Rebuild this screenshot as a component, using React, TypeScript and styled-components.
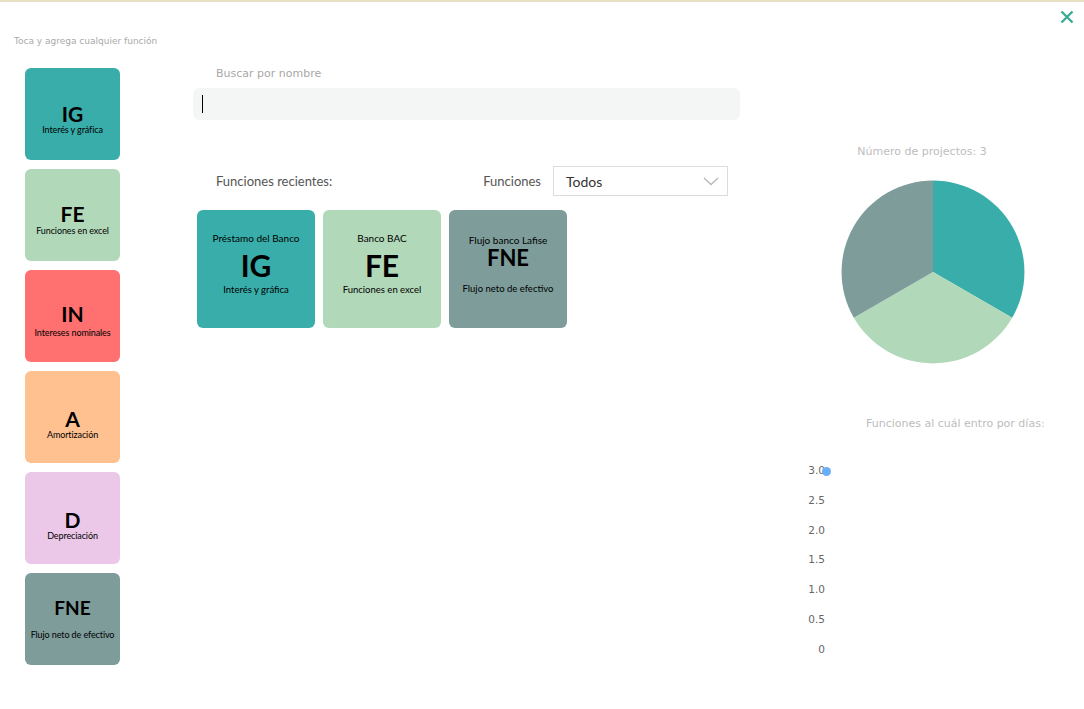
import React from "react";
import styled, { createGlobalStyle } from "styled-components";

const Global = createGlobalStyle`
  html, body { margin: 0; padding: 0; background: #fff; }
  body { font-family: "Open Sans", "DejaVu Sans", sans-serif; }
  * { box-sizing: border-box; }
`;

const Frame = styled.div`
  width: 1084px;
  height: 709px;
  border-top: 2px solid #e9dfc4;
  background: #fff;
  overflow: hidden;
`;

const Header = styled.header`
  display: flex;
  justify-content: space-between;
  align-items: flex-start;
  height: 66px;
  padding: 0 10px 0 14px;
`;

const Subtitle = styled.p`
  margin: 33px 0 0;
  font-family: "DejaVu Sans", sans-serif;
  font-size: 9px;
  line-height: 12px;
  color: #a9a9a9;
`;

const CloseButton = styled.button`
  margin-top: 7px;
  padding: 0;
  border: 0;
  background: none;
  width: 15px;
  height: 15px;
  display: flex;
  align-items: center;
  justify-content: center;
  cursor: pointer;
`;

const Body = styled.div`
  display: flex;
  align-items: flex-start;
  padding-left: 25px;
`;

const Sidebar = styled.nav`
  flex: 0 0 95px;
  display: flex;
  flex-direction: column;
  gap: 9px;
`;

const SideCard = styled.div<{ $bg: string; $top: number; $gap: number }>`
  width: 95px;
  height: 92px;
  border-radius: 6px;
  background: ${(p) => p.$bg};
  display: flex;
  flex-direction: column;
  align-items: center;
  padding-top: ${(p) => p.$top}px;
  gap: ${(p) => p.$gap}px;
  color: #000;
`;

const SideTitle = styled.div<{ $size: number }>`
  font-family: "Lato", sans-serif;
  font-weight: 700;
  font-size: ${(p) => p.$size}px;
  line-height: 20px;
`;

const SideSub = styled.div`
  font-family: "Lato", sans-serif;
  font-size: 9px;
  line-height: 12px;
  letter-spacing: -0.1px;
`;

const Main = styled.main`
  flex: 0 0 547px;
  margin-left: 73px;
  display: flex;
  flex-direction: column;
`;

const FieldLabel = styled.label`
  padding-left: 23px;
  font-family: "DejaVu Sans", sans-serif;
  font-size: 11px;
  line-height: 12px;
  color: #a8a8a8;
`;

const SearchBox = styled.div`
  margin-top: 8px;
  height: 32px;
  border-radius: 6px;
  background: #f3f6f5;
  display: flex;
  align-items: center;
  padding-left: 9px;
`;

const Caret = styled.span`
  width: 1px;
  height: 18px;
  background: #000;
`;

const RecentBar = styled.div`
  margin-top: 46px;
  height: 30px;
  display: flex;
  align-items: center;
  justify-content: space-between;
  padding: 0 12px 0 23px;
`;

const SectionLabel = styled.span`
  font-family: "Lato", sans-serif;
  font-size: 13px;
  color: #555;
`;

const FilterGroup = styled.div`
  display: flex;
  align-items: center;
  gap: 12px;
`;

const Select = styled.div`
  width: 175px;
  height: 30px;
  border: 1px solid #dcdcdc;
  display: flex;
  align-items: center;
  justify-content: space-between;
  padding: 0 8px 0 12px;
  font-family: "Lato", sans-serif;
  font-size: 14px;
  color: #333;
`;

const RecentGrid = styled.div`
  margin-top: 14px;
  padding-left: 4px;
  display: flex;
  gap: 8px;
`;

const RecentCard = styled.div<{ $bg: string }>`
  width: 118px;
  height: 118px;
  border-radius: 6px;
  background: ${(p) => p.$bg};
  display: flex;
  flex-direction: column;
  align-items: center;
  color: #000;
`;

const RecentCaption = styled.div<{ $top: number }>`
  margin-top: ${(p) => p.$top}px;
  font-family: "Lato", sans-serif;
  font-size: 10px;
  line-height: 12px;
`;

const RecentTitle = styled.div<{ $size: number; $mt: number; $h: number }>`
  margin-top: ${(p) => p.$mt}px;
  height: ${(p) => p.$h}px;
  font-family: "Lato", sans-serif;
  font-weight: 700;
  font-size: ${(p) => p.$size}px;
  line-height: ${(p) => p.$h}px;
`;

const RecentSub = styled.div<{ $mt: number }>`
  margin-top: ${(p) => p.$mt}px;
  font-family: "Lato", sans-serif;
  font-size: 9.5px;
  line-height: 12px;
`;

const Aside = styled.aside`
  flex: 0 0 270px;
  margin-left: 58px;
  display: flex;
  flex-direction: column;
  align-items: center;
`;

const ChartTitle = styled.h3`
  margin: 77px 22px 0 0;
  font-family: "DejaVu Sans", sans-serif;
  font-weight: 400;
  font-size: 11px;
  line-height: 14px;
  color: #bdbdbd;
`;

const PieWrap = styled.div`
  margin-top: 21px;
  width: 184px;
  height: 184px;
`;

const LineSection = styled.section`
  align-self: stretch;
  margin-top: 53px;
  display: flex;
  flex-direction: column;
`;

const LineTitle = styled.h3`
  margin: 0;
  padding-left: 68px;
  font-family: "DejaVu Sans", sans-serif;
  font-weight: 400;
  font-size: 11px;
  line-height: 14px;
  color: #bdbdbd;
`;

const Plot = styled.div`
  position: relative;
  margin-top: 25px;
  width: 40px;
`;

const Axis = styled.div`
  display: flex;
  flex-direction: column;
  width: 27px;
`;

const Tick = styled.span`
  height: 29.8px;
  line-height: 29.8px;
  text-align: right;
  font-family: "DejaVu Sans", sans-serif;
  font-size: 10.5px;
  color: #666;
`;

const Dot = styled.span`
  position: absolute;
  left: 24px;
  top: 10.5px;
  width: 9px;
  height: 9px;
  border-radius: 50%;
  background: #6aaef8;
`;

const sideItems = [
  { t: "IG", s: "Interés y gráfica", bg: "#38ada9", size: 21, top: 36, gap: 0 },
  { t: "FE", s: "Funciones en excel", bg: "#b1d8b9", size: 21, top: 35, gap: 1 },
  { t: "IN", s: "Intereses nominales", bg: "#ff7070", size: 21, top: 34, gap: 3 },
  { t: "A", s: "Amortización", bg: "#ffc190", size: 21, top: 38, gap: 0 },
  { t: "D", s: "Depreciación", bg: "#ebc8e8", size: 21, top: 38, gap: 0 },
  { t: "FNE", s: "Flujo neto de efectivo", bg: "#7d9c9a", size: 19, top: 25, gap: 11 },
];

const recentItems = [
  { c: "Préstamo del Banco", t: "IG", s: "Interés y gráfica", bg: "#38ada9", ct: 22, size: 30, mt: 5, h: 32, smt: 3 },
  { c: "Banco BAC", t: "FE", s: "Funciones en excel", bg: "#b1d8b9", ct: 22, size: 30, mt: 5, h: 32, smt: 3 },
  { c: "Flujo banco Lafise", t: "FNE", s: "Flujo neto de efectivo", bg: "#7d9c9a", ct: 24, size: 22, mt: 1, h: 22, smt: 14 },
];

const ticks = ["3.0", "2.5", "2.0", "1.5", "1.0", "0.5", "0"];

export default function App() {
  return (
    <>
      <Global />
      <Frame>
        <Header>
          <Subtitle>Toca y agrega cualquier función</Subtitle>
          <CloseButton aria-label="Cerrar">
            <svg width="14" height="14" viewBox="0 0 14 14">
              <path d="M1.5 1.5 L12.5 12.5 M12.5 1.5 L1.5 12.5" stroke="#3aab97" strokeWidth="2.4" strokeLinecap="butt" />
            </svg>
          </CloseButton>
        </Header>
        <Body>
          <Sidebar>
            {sideItems.map((it) => (
              <SideCard key={it.t} $bg={it.bg} $top={it.top} $gap={it.gap}>
                <SideTitle $size={it.size}>{it.t}</SideTitle>
                <SideSub>{it.s}</SideSub>
              </SideCard>
            ))}
          </Sidebar>
          <Main>
            <FieldLabel>Buscar por nombre</FieldLabel>
            <SearchBox>
              <Caret />
            </SearchBox>
            <RecentBar>
              <SectionLabel>Funciones recientes:</SectionLabel>
              <FilterGroup>
                <SectionLabel>Funciones</SectionLabel>
                <Select>
                  <span>Todos</span>
                  <svg width="16" height="9" viewBox="0 0 16 9">
                    <path d="M1 1 L8 7.5 L15 1" fill="none" stroke="#b8b8b8" strokeWidth="1.3" />
                  </svg>
                </Select>
              </FilterGroup>
            </RecentBar>
            <RecentGrid>
              {recentItems.map((it) => (
                <RecentCard key={it.t} $bg={it.bg}>
                  <RecentCaption $top={it.ct}>{it.c}</RecentCaption>
                  <RecentTitle $size={it.size} $mt={it.mt} $h={it.h}>
                    {it.t}
                  </RecentTitle>
                  <RecentSub $mt={it.smt}>{it.s}</RecentSub>
                </RecentCard>
              ))}
            </RecentGrid>
          </Main>
          <Aside>
            <ChartTitle>Número de projectos: 3</ChartTitle>
            <PieWrap>
              <svg width="184" height="184" viewBox="0 0 184 184">
                <path d="M92 92 L92 0.5 A91.5 91.5 0 0 1 171.2 137.7 Z" fill="#38ada9" />
                <path d="M92 92 L171.2 137.7 A91.5 91.5 0 0 1 12.8 137.7 Z" fill="#b1d8b9" />
                <path d="M92 92 L12.8 137.7 A91.5 91.5 0 0 1 92 0.5 Z" fill="#7d9c9a" />
              </svg>
            </PieWrap>
            <LineSection>
              <LineTitle>Funciones al cuál entro por días:</LineTitle>
              <Plot>
                <Axis>
                  {ticks.map((t) => (
                    <Tick key={t}>{t}</Tick>
                  ))}
                </Axis>
                <Dot />
              </Plot>
            </LineSection>
          </Aside>
        </Body>
      </Frame>
    </>
  );
}
